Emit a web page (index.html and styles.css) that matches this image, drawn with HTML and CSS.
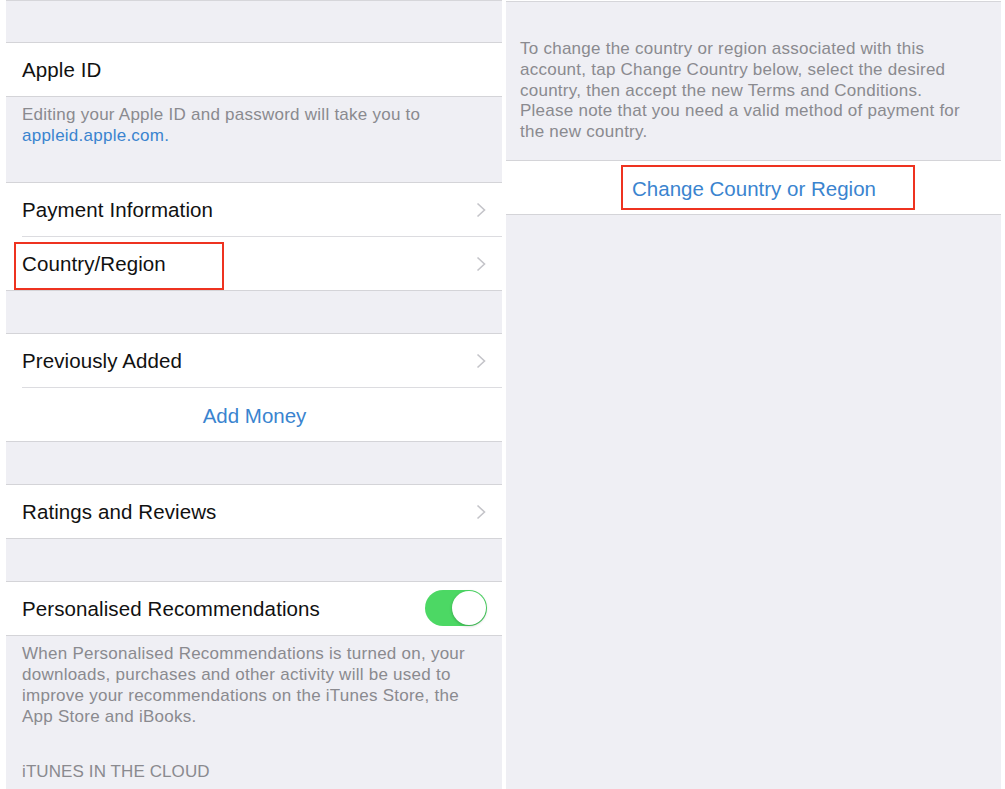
FILE: index.html
```html
<!DOCTYPE html>
<html lang="en">
<head>
<meta charset="utf-8">
<title>Settings</title>
<link rel="stylesheet" href="styles.css">
</head>
<body>
<div class="screens">
  <section class="panel left">
    <div class="gap top"></div>
    <div class="group">
      <div class="row"><span class="label">Apple ID</span></div>
    </div>
    <div class="footer f-apple">Editing your Apple ID and password will take you to<br><span class="link">appleid.apple.com.</span></div>
    <div class="group">
      <div class="row sep"><span class="label">Payment Information</span><svg class="chev" viewBox="0 0 10 16"><path d="M1.5 1.5 L8.5 8 L1.5 14.5"/></svg></div>
      <div class="row"><span class="label">Country/Region</span><svg class="chev" viewBox="0 0 10 16"><path d="M1.5 1.5 L8.5 8 L1.5 14.5"/></svg><div class="mark mark-left"></div></div>
    </div>
    <div class="gap"></div>
    <div class="group">
      <div class="row sep"><span class="label">Previously Added</span><svg class="chev" viewBox="0 0 10 16"><path d="M1.5 1.5 L8.5 8 L1.5 14.5"/></svg></div>
      <div class="row center"><span class="link action">Add Money</span></div>
    </div>
    <div class="gap"></div>
    <div class="group">
      <div class="row"><span class="label">Ratings and Reviews</span><svg class="chev" viewBox="0 0 10 16"><path d="M1.5 1.5 L8.5 8 L1.5 14.5"/></svg></div>
    </div>
    <div class="gap"></div>
    <div class="group">
      <div class="row"><span class="label">Personalised Recommendations</span><div class="toggle"><div class="knob"></div></div></div>
    </div>
    <div class="footer f-rec">When Personalised Recommendations is turned on, your downloads, purchases and other activity will be used to improve your recommendations on the iTunes Store, the App Store and iBooks.</div>
    <div class="header">iTUNES IN THE CLOUD</div>
  </section>
  <section class="panel right">
    <div class="footer f-change">To change the country or region associated with this account, tap Change Country below, select the desired country, then accept the new Terms and Conditions. Please note that you need a valid method of payment for the new country.</div>
    <div class="group">
      <div class="row center"><span class="link action">Change Country or Region</span><div class="mark mark-right"></div></div>
    </div>
  </section>
</div>
</body>
</html>
```
FILE: styles.css
```css
html, body {
  margin: 0;
  padding: 0;
  background: #ffffff;
}
body {
  font-family: "Liberation Sans", Arial, sans-serif;
  width: 1005px;
  height: 789px;
  overflow: hidden;
}
.screens {
  display: flex;
  gap: 4px;
  padding-left: 6px;
  height: 789px;
}
.panel {
  background: #efeff4;
  height: 789px;
  overflow: hidden;
  box-sizing: border-box;
  border-top: 1px solid #d6d6da;
}
.panel.left {
  width: 496px;
}
.panel.right {
  width: 495px;
  margin-top: 1px;
}
.gap {
  height: 42px;
}
.gap.top {
  height: 41px;
}
.group {
  background: #ffffff;
  border-top: 1px solid #d4d4d8;
  border-bottom: 1px solid #d4d4d8;
}
.row {
  position: relative;
  height: 53px;
  display: flex;
  align-items: center;
  padding: 0 15px 0 16px;
}
.row.sep {
  margin-bottom: 1px;
}
.row.sep::after {
  content: "";
  position: absolute;
  left: 16px;
  right: 0;
  bottom: -1px;
  height: 1px;
  background: #dcdce0;
}
.row.center {
  justify-content: center;
}
.label {
  flex: 1;
  font-size: 20.5px;
  color: #111111;
  letter-spacing: 0.1px;
}
.link {
  color: #3a84cf;
}
.action {
  font-size: 20.5px;
  padding-top: 2px;
}
.chev {
  width: 10px;
  height: 16px;
  margin-right: 1px;
}
.chev path {
  fill: none;
  stroke: #c4c4c9;
  stroke-width: 1.6;
}
.toggle {
  width: 62px;
  height: 36px;
  border-radius: 18px;
  background: #4cd864;
  position: relative;
  margin-top: -1px;
}
.knob {
  position: absolute;
  right: 1px;
  top: 1px;
  width: 34px;
  height: 34px;
  border-radius: 50%;
  background: #ffffff;
  box-shadow: 0 1px 3px rgba(0, 0, 0, 0.25);
}
.footer {
  font-size: 17px;
  letter-spacing: 0.25px;
  line-height: 21px;
  color: #8a8a8f;
  padding: 7px 16px 0 16px;
}
.f-apple {
  box-sizing: border-box;
  height: 85px;
}
.f-change {
  box-sizing: border-box;
  height: 158px;
  padding: 37px 30px 0 14px;
  line-height: 20.75px;
}
.header {
  font-size: 17px;
  letter-spacing: 0.1px;
  color: #8a8a8f;
  padding: 34px 16px 0 16px;
  line-height: 21px;
}
.mark {
  position: absolute;
  border: 2.5px solid #ee3320;
  box-sizing: border-box;
}
.mark-left {
  left: 8px;
  top: 5px;
  width: 210px;
  height: 48px;
}
.mark-right {
  left: 115px;
  top: 4px;
  width: 294px;
  height: 45px;
}
```
